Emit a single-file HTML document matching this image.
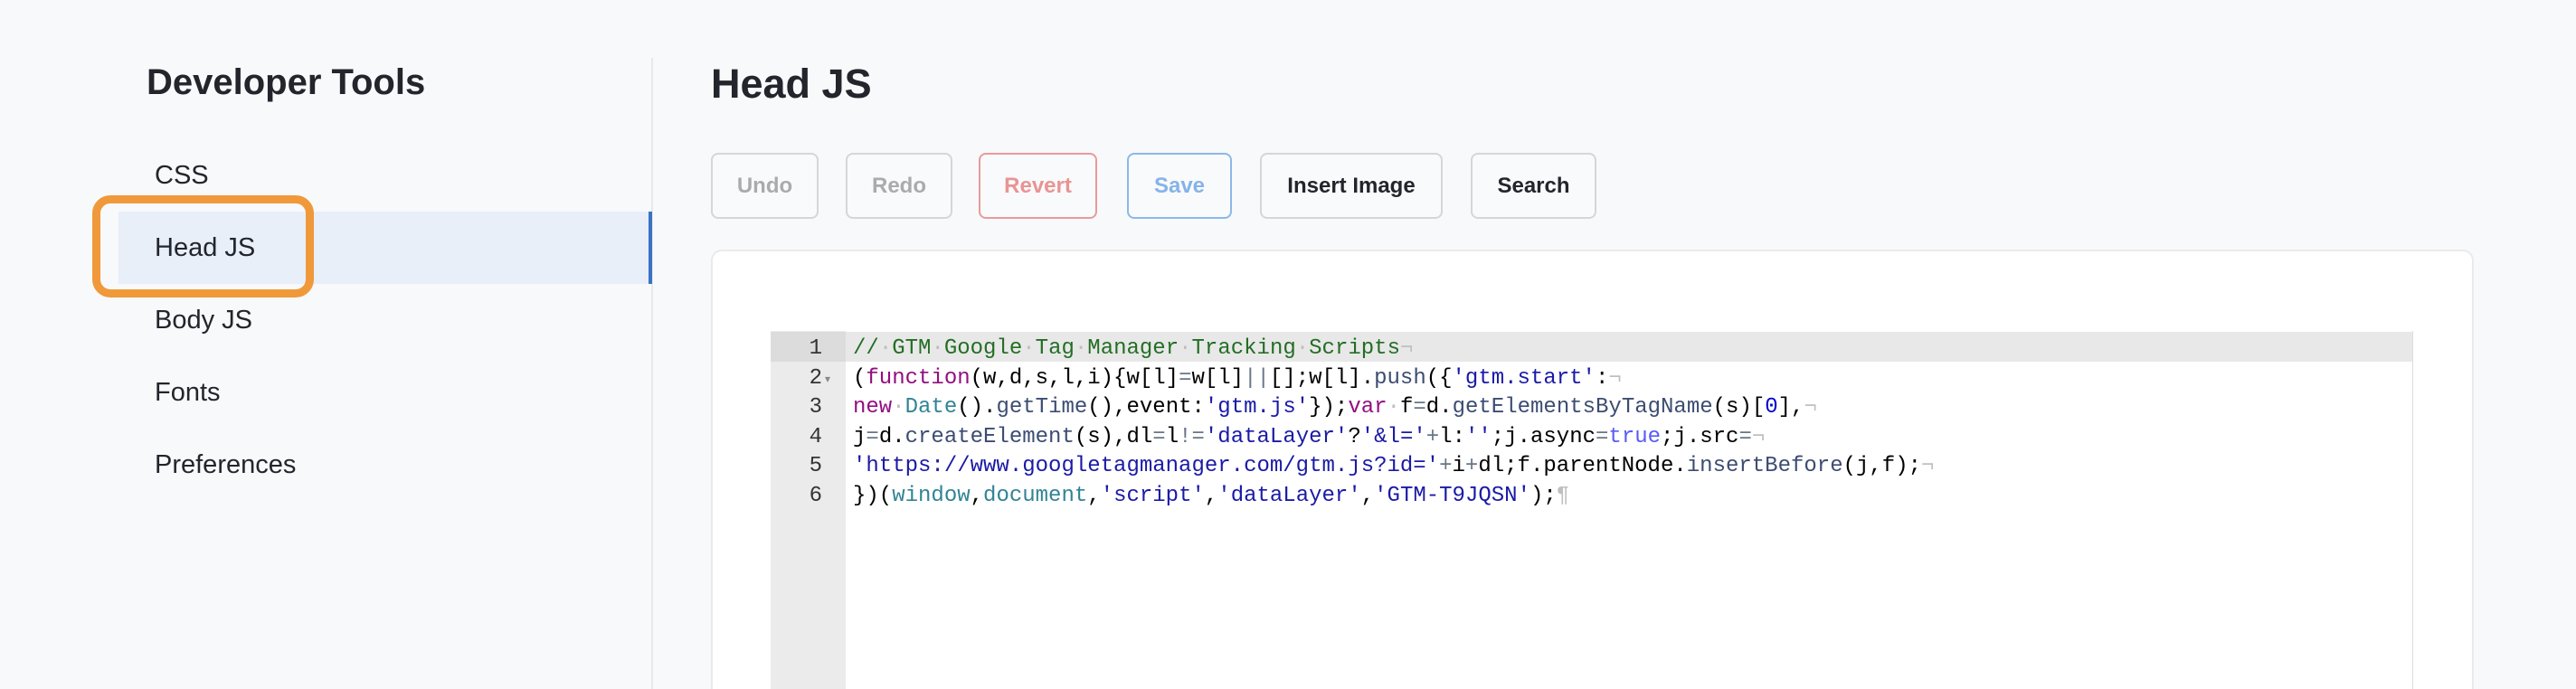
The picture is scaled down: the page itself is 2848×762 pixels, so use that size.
<!DOCTYPE html>
<html><head><meta charset="utf-8"><style>
html,body{margin:0;padding:0;width:2848px;height:762px;overflow:hidden}
body{background:#f8f9fb;position:relative;font-family:"Liberation Sans",sans-serif;color:#212529}
.abs{position:absolute}
.h1{left:162px;top:64px;font-size:40px;font-weight:bold;line-height:54px;color:#22252b}
.div{left:720px;top:64px;width:2px;height:698px;background:#e7e9ec}
.act{left:131px;top:234px;width:590px;height:80px;background:#e8eff8}
.bar{left:717px;top:234px;width:4px;height:80px;background:#3a73c4}
.nav{left:171px;font-size:29px;line-height:40px;color:#22252b}
.orange{left:102px;top:216px;width:227px;height:95px;border:9px solid #f0993a;border-radius:20px}
.title{left:786px;top:64px;font-size:45px;font-weight:bold;line-height:58px;color:#22252b}
.btn{top:169px;height:69px;border:2px solid #d4d6d9;border-radius:8px;font-size:24px;font-weight:bold;line-height:69px;text-align:center;box-sizing:content-box;background:#f9fafb}
.card{left:786px;top:276px;width:1945px;height:486px;background:#fff;border:2px solid #e9eaec;border-bottom:none;border-radius:12px 12px 0 0}
.ed{left:852px;top:366px;width:1814px;height:396px;background:#fff;border-left:1px solid #ddd;border-right:1px solid #ddd}
.gut{left:852px;top:366px;width:83px;height:396px;background:#ebebeb}
.actl{left:852px;top:367px;width:1815px;height:33px;background:#e8e8e8}
.actg{left:852px;top:367px;width:83px;height:33px;background:#dcdcdc}
.code{left:943px;top:370px;font-family:"Liberation Mono",monospace;font-size:24px;line-height:32.6px;white-space:pre;color:#000}
.ln{left:852px;width:57px;top:370px;font-family:"Liberation Mono",monospace;font-size:24px;line-height:32.6px;text-align:right;color:#333;white-space:pre}
.c{color:#236e24}.k{color:#930f80}.s{color:#1a1aa6}.f{color:#3c4c72}.v{color:#318495}.i{color:#bfbfbf}.o{color:#687687}.b{color:#585cf6}.n{color:#0000cd}
</style></head><body>
<div class="abs h1">Developer Tools</div>
<div class="abs div"></div>
<div class="abs act"></div><div class="abs bar"></div>
<div class="abs nav" style="top:174px">CSS</div>
<div class="abs nav" style="top:254px">Head JS</div>
<div class="abs nav" style="top:334px">Body JS</div>
<div class="abs nav" style="top:414px">Fonts</div>
<div class="abs nav" style="top:494px">Preferences</div>
<div class="abs orange"></div>
<div class="abs title">Head JS</div>
<div class="abs btn" style="left:786px;width:115px;color:#a9abae">Undo</div>
<div class="abs btn" style="left:935px;width:114px;color:#a9abae">Redo</div>
<div class="abs btn" style="left:1082px;width:127px;color:#e99494;border-color:#e99a9a">Revert</div>
<div class="abs btn" style="left:1246px;width:112px;color:#86b3e8;border-color:#8db8e8">Save</div>
<div class="abs btn" style="left:1393px;width:198px;color:#22252b">Insert Image</div>
<div class="abs btn" style="left:1626px;width:135px;color:#22252b">Search</div>
<div class="abs card"></div>
<div class="abs ed"></div>
<div class="abs gut"></div>
<div class="abs actl"></div>
<div class="abs actg"></div>
<div class="abs ln">1
2
3
4
5
6</div>
<div class="abs" style="left:912px;top:412px;font-size:12px;color:#888">▾</div>
<div class="abs code"><span class="c">//<span class="i">·</span>GTM<span class="i">·</span>Google<span class="i">·</span>Tag<span class="i">·</span>Manager<span class="i">·</span>Tracking<span class="i">·</span>Scripts</span><span class="i">¬</span>
(<span class="k">function</span>(w,d,s,l,i){w[l]<span class="o">=</span>w[l]<span class="o">||</span>[];w[l].<span class="f">push</span>({<span class="s">'gtm.start'</span>:<span class="i">¬</span>
<span class="k">new</span><span class="i">·</span><span class="v">Date</span>().<span class="f">getTime</span>(),event:<span class="s">'gtm.js'</span>});<span class="k">var</span><span class="i">·</span>f<span class="o">=</span>d.<span class="f">getElementsByTagName</span>(s)[<span class="n">0</span>],<span class="i">¬</span>
j<span class="o">=</span>d.<span class="f">createElement</span>(s),dl<span class="o">=</span>l<span class="o">!=</span><span class="s">'dataLayer'</span>?<span class="s">'&amp;l='</span><span class="o">+</span>l:<span class="s">''</span>;j.async<span class="o">=</span><span class="b">true</span>;j.src<span class="o">=</span><span class="i">¬</span>
<span class="s">'https://www.googletagmanager.com/gtm.js?id='</span><span class="o">+</span>i<span class="o">+</span>dl;f.parentNode.<span class="f">insertBefore</span>(j,f);<span class="i">¬</span>
})(<span class="v">window</span>,<span class="v">document</span>,<span class="s">'script'</span>,<span class="s">'dataLayer'</span>,<span class="s">'GTM-T9JQSN'</span>);<span class="i">¶</span></div>
</body></html>
